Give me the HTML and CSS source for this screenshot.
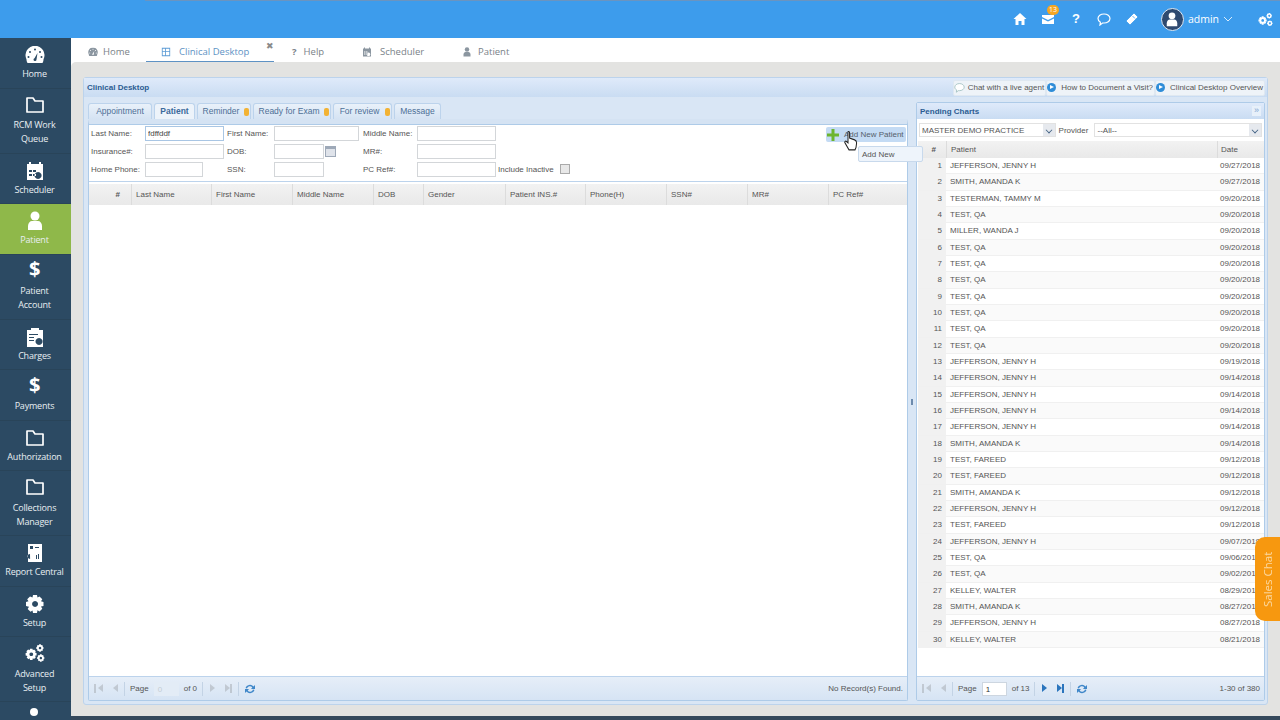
FILE: index.html
```html
<!DOCTYPE html>
<html lang="en">
<head>
    <meta charset="UTF-8">
    <title>Clinical Desktop</title>
    <link rel="stylesheet" href="styles.css">
</head>
<body>
    <svg class="defs" width="0" height="0">
        <symbol id="i-folder" viewBox="0 0 20 18"><path d="M2 2h6l2 3h8v11H2z" fill="none" stroke="currentColor" stroke-width="1.7" stroke-linejoin="round"/></symbol>
        <symbol id="i-gauge" viewBox="0 0 20 18"><path fill-rule="evenodd" d="M1.500 13.500A9.500 9.500 0 1 1 18.500 13.500c0 1.500-.5 2.500-1 3.500h-15c-.5-1-1-2-1-3.500zM9 3.500a1 1 0 1 0 2 0a1 1 0 1 0-2 0zM4 6a1 1 0 1 0 2 0a1 1 0 1 0-2 0zM14 6a1 1 0 1 0 2 0a1 1 0 1 0-2 0zM2.500 11a1 1 0 1 0 2 0a1 1 0 1 0-2 0zM15.500 11a1 1 0 1 0 2 0a1 1 0 1 0-2 0zM8.500 13.500a1.500 1.500 0 1 0 3 0l1-6.500-3 5.200c-.6.200-1 .7-1 1.300z" fill="currentColor"/></symbol>
        <symbol id="i-calendar" viewBox="0 0 18 20"><path fill-rule="evenodd" d="M1 3h2V1h2v2h8V1h2v2h2v16H1zm2 6v2h3V9zm4 0v2h3V9zM3 13v2h3v-2zm4 0v2h3v-2zm5-2a3.500 3.500 0 1 0 .1 0z" fill="currentColor"/></symbol>
        <symbol id="i-person" viewBox="0 0 16 20"><circle cx="8" cy="5" r="4.500" fill="currentColor"/><path d="M1 19v-4c0-3 2-5 4-5h6c2 0 4 2 4 5v4z" fill="currentColor"/></symbol>
        <symbol id="i-clipboard" viewBox="0 0 18 20"><path fill-rule="evenodd" d="M1 3h4V1h8v2h4v17H1zm2 4v1h9V7zm0 3v1h5v-1zm0 3v1h5v-1zm10-2a3.500 3.500 0 1 0 .1 0z" fill="currentColor"/></symbol>
        <symbol id="i-report" viewBox="0 0 16 20"><path fill-rule="evenodd" d="M1 1h14v18H1zm2 2v3h3V3zm5 1v1h4V4zm-5 7a2.500 2.500 0 1 0 .1 5zm6 1v4h1v-4zm2-1v5h1v-5z" fill="currentColor"/></symbol>
        <symbol id="i-gear" viewBox="0 0 20 20"><path fill-rule="evenodd" d="M8 1h4l.5 2.500 2-1 2.800 2.800-1.300 2 2.500.7v4l-2.500.5 1.300 2.200-2.800 2.800-2-1.300L12 19H8l-.5-2.500-2 1.300-2.800-2.800 1.300-2.200L1 12V8l2.500-.7-1.300-2L5 2.500l2.500 1zM10 7a3 3 0 1 0 .1 0z" fill="currentColor"/></symbol>
        <symbol id="i-cog-pair" viewBox="0 0 24 24"><use href="#i-gear" x="0" y="6" width="15" height="15"/><use href="#i-gear" x="13" y="1" width="10" height="10"/><use href="#i-gear" x="14" y="13" width="10" height="10"/></symbol>
        <symbol id="i-refresh" viewBox="0 0 12 12"><path d="M1.500 5a4.500 4 0 0 1 8-1.500L11 2v4H7l1.300-1.500A3 3 0 0 0 3 5.500zM10.500 7a4.500 4 0 0 1-8 1.500L1 10V6h4L3.700 7.500A3 3 0 0 0 9 6.500z" fill="#3f87c9"/></symbol>
    </svg>

    <header class="topbar">
        <svg class="top-icon" viewBox="0 0 14 14"><path d="M7 1 .5 7H2.500v6h3V9h3v4h3V7h2z" fill="currentColor"/></svg>
        <span class="mail">
            <svg class="top-icon" viewBox="0 0 14 14"><path d="M1 3h12v2L7 8 1 5zm0 3.500L7 9.500l6-3V12H1z" fill="currentColor"/></svg>
            <b class="mail-badge">13</b>
        </span>
        <span class="top-icon help">?</span>
        <svg class="top-icon" viewBox="0 0 14 14"><path d="M7 2c3.300 0 6 2 6 4.500S10.300 11 7 11H5.500L3 13l.4-2.800C1.900 9.400 1 8 1 6.500 1 4 3.700 2 7 2z" fill="none" stroke="currentColor" stroke-width="1.200"/></svg>
        <svg class="top-icon" viewBox="0 0 14 14"><path d="M9 1l4 4-8 8-4-4zM7.500 4 10 6.500" fill="currentColor" stroke="#3d9cec" stroke-width=".8"/></svg>
        <span class="avatar"><svg width="12" height="15" viewBox="0 0 16 20"><use href="#i-person"/></svg></span>
        <span class="user">admin</span>
        <svg class="chev" viewBox="0 0 10 6"><path d="M1 1l4 4 4-4" fill="none" stroke="currentColor"/></svg>
        <svg class="top-icon cogs" viewBox="0 0 24 24"><use href="#i-cog-pair"/></svg>
    </header>

    <div class="shell">
        <nav class="sidebar">
            <a class="nav-item"><svg class="nav-icon" viewBox="0 0 20 18"><use href="#i-gauge"/></svg>Home</a>
            <a class="nav-item tall"><svg class="nav-icon" viewBox="0 0 20 18"><use href="#i-folder"/></svg>RCM Work<br>Queue</a>
            <a class="nav-item"><svg class="nav-icon" viewBox="0 0 18 20"><use href="#i-calendar"/></svg>Scheduler</a>
            <a class="nav-item active"><svg class="nav-icon" viewBox="0 0 16 20"><use href="#i-person"/></svg>Patient</a>
            <a class="nav-item tall"><span class="dollar">$</span>Patient<br>Account</a>
            <a class="nav-item"><svg class="nav-icon" viewBox="0 0 18 20"><use href="#i-clipboard"/></svg>Charges</a>
            <a class="nav-item"><span class="dollar">$</span>Payments</a>
            <a class="nav-item"><svg class="nav-icon" viewBox="0 0 20 18"><use href="#i-folder"/></svg>Authorization</a>
            <a class="nav-item tall"><svg class="nav-icon" viewBox="0 0 20 18"><use href="#i-folder"/></svg>Collections<br>Manager</a>
            <a class="nav-item"><svg class="nav-icon" viewBox="0 0 16 20"><use href="#i-report"/></svg>Report Central</a>
            <a class="nav-item"><svg class="nav-icon" viewBox="0 0 20 20"><use href="#i-gear"/></svg>Setup</a>
            <a class="nav-item tall"><svg class="nav-icon" viewBox="0 0 24 24"><use href="#i-cog-pair"/></svg>Advanced<br>Setup</a>
            <span class="nav-dot"></span>
        </nav>

        <div class="workspace">
            <div class="page-tabs">
                <a class="page-tab tab-home"><svg class="tab-icon" viewBox="0 0 20 18"><use href="#i-gauge"/></svg>Home</a>
                <a class="page-tab tab-clinical current">
                    <svg class="tab-icon" viewBox="0 0 12 12"><path d="M1 1h10v10H1zm1 1v3h3V2zm4 0v3h4V2zM2 6v4h3V6zm4 0v4h4V6z" fill="currentColor" fill-rule="evenodd"/></svg>Clinical Desktop
                    <span class="tab-close">✖</span>
                </a>
                <a class="page-tab tab-help"><span class="tab-q">?</span>Help</a>
                <a class="page-tab tab-sched"><svg class="tab-icon" viewBox="0 0 18 20"><use href="#i-calendar"/></svg>Scheduler</a>
                <a class="page-tab tab-patient"><svg class="tab-icon" viewBox="0 0 16 20"><use href="#i-person"/></svg>Patient</a>
            </div>

            <div class="stage">
                <section class="desk">
                    <div class="desk-title">
                        <span>Clinical Desktop</span>
                        <div class="help-links">
                            <a class="help-link"><svg width="11" height="11" viewBox="0 0 14 14"><path d="M7 2c3.300 0 6 2 6 4.500S10.300 11 7 11H5.500L3 13l.4-2.800C1.900 9.400 1 8 1 6.500 1 4 3.700 2 7 2z" fill="#fff" stroke="#9bb" stroke-width="1"/></svg>Chat with a live agent</a>
                            <a class="help-link"><i class="play"></i>How to Document a Visit?</a>
                            <a class="help-link"><i class="play"></i>Clinical Desktop Overview</a>
                        </div>
                    </div>

                    <div class="desk-body">
                        <div class="left-col">
                            <div class="sub-tabs">
                                <a class="sub-tab w-appt">Appointment</a>
                                <a class="sub-tab w-patient selected">Patient</a>
                                <a class="sub-tab w-rem">Reminder<i class="dot-badge"></i></a>
                                <a class="sub-tab w-ready">Ready for Exam<i class="dot-badge"></i></a>
                                <a class="sub-tab w-review">For review<i class="dot-badge"></i></a>
                                <a class="sub-tab w-msg">Message</a>
                            </div>
                            <div class="left-panel">
                                <form class="search">
                                    <label>Last Name:</label><input class="f-long focus" value="fdffddf">
                                    <label>First Name:</label><input class="f-mid">
                                    <label>Middle Name:</label><input class="f-long">
                                    <span></span><span></span>
                                    <label>Insurance#:</label><input class="f-long">
                                    <label>DOB:</label><span class="date-wrap"><input class="f-short"><i class="cal"></i></span>
                                    <label>MR#:</label><input class="f-long">
                                    <span></span><span></span>
                                    <label>Home Phone:</label><input class="f-phone">
                                    <label>SSN:</label><input class="f-short">
                                    <label>PC Ref#:</label><input class="f-long">
                                    <label>Include Inactive</label><i class="check"></i>
                                </form>
                                <a class="add-new">
                                    <svg width="12" height="12" viewBox="0 0 12 12"><path d="M4.500 0h3v4.500H12v3H7.500V12h-3V7.500H0v-3h4.500z" fill="#6db52f"/></svg>
                                    Add New Patient
                                </a>
                                <div class="grid-head">
                                    <span class="num">#</span><span>Last Name</span><span>First Name</span><span>Middle Name</span><span>DOB</span><span>Gender</span><span>Patient INS.#</span><span>Phone(H)</span><span>SSN#</span><span>MR#</span><span>PC Ref#</span>
                                </div>
                                <div class="grid-empty"></div>
                                <div class="pager">
                                    <i class="pg first off"></i><i class="pg prev off"></i><i class="sep"></i>
                                    <span>Page</span><span class="pg-input blank">0</span><span>of 0</span><i class="sep"></i>
                                    <i class="pg next off"></i><i class="pg last off"></i><i class="sep"></i>
                                    <svg width="12" height="12" viewBox="0 0 12 12"><use href="#i-refresh"/></svg>
                                    <span class="pg-info">No Record(s) Found.</span>
                                </div>
                            </div>
                        </div>

                        <div class="splitter"><i></i></div>

                        <aside class="right-col">
                            <div class="right-title">Pending Charts<span class="collapse">»</span></div>
                            <div class="filters">
                                <span class="select practice">MASTER DEMO PRACTICE<i class="arrow"></i></span>
                                <span class="provider">Provider</span>
                                <span class="select all">--All--<i class="arrow"></i></span>
                            </div>
                            <div class="chart-head"><span class="num">#</span><span>Patient</span><span>Date</span></div>
                            <div class="chart-rows">
                                <div class="row"><span>1</span><span>JEFFERSON, JENNY H</span><span>09/27/2018</span></div>
                                <div class="row"><span>2</span><span>SMITH, AMANDA K</span><span>09/27/2018</span></div>
                                <div class="row"><span>3</span><span>TESTERMAN, TAMMY M</span><span>09/20/2018</span></div>
                                <div class="row"><span>4</span><span>TEST, QA</span><span>09/20/2018</span></div>
                                <div class="row"><span>5</span><span>MILLER, WANDA J</span><span>09/20/2018</span></div>
                                <div class="row"><span>6</span><span>TEST, QA</span><span>09/20/2018</span></div>
                                <div class="row"><span>7</span><span>TEST, QA</span><span>09/20/2018</span></div>
                                <div class="row"><span>8</span><span>TEST, QA</span><span>09/20/2018</span></div>
                                <div class="row"><span>9</span><span>TEST, QA</span><span>09/20/2018</span></div>
                                <div class="row"><span>10</span><span>TEST, QA</span><span>09/20/2018</span></div>
                                <div class="row"><span>11</span><span>TEST, QA</span><span>09/20/2018</span></div>
                                <div class="row"><span>12</span><span>TEST, QA</span><span>09/20/2018</span></div>
                                <div class="row"><span>13</span><span>JEFFERSON, JENNY H</span><span>09/19/2018</span></div>
                                <div class="row"><span>14</span><span>JEFFERSON, JENNY H</span><span>09/14/2018</span></div>
                                <div class="row"><span>15</span><span>JEFFERSON, JENNY H</span><span>09/14/2018</span></div>
                                <div class="row"><span>16</span><span>JEFFERSON, JENNY H</span><span>09/14/2018</span></div>
                                <div class="row"><span>17</span><span>JEFFERSON, JENNY H</span><span>09/14/2018</span></div>
                                <div class="row"><span>18</span><span>SMITH, AMANDA K</span><span>09/14/2018</span></div>
                                <div class="row"><span>19</span><span>TEST, FAREED</span><span>09/12/2018</span></div>
                                <div class="row"><span>20</span><span>TEST, FAREED</span><span>09/12/2018</span></div>
                                <div class="row"><span>21</span><span>SMITH, AMANDA K</span><span>09/12/2018</span></div>
                                <div class="row"><span>22</span><span>JEFFERSON, JENNY H</span><span>09/12/2018</span></div>
                                <div class="row"><span>23</span><span>TEST, FAREED</span><span>09/12/2018</span></div>
                                <div class="row"><span>24</span><span>JEFFERSON, JENNY H</span><span>09/07/2018</span></div>
                                <div class="row"><span>25</span><span>TEST, QA</span><span>09/06/2018</span></div>
                                <div class="row"><span>26</span><span>TEST, QA</span><span>09/02/2018</span></div>
                                <div class="row"><span>27</span><span>KELLEY, WALTER</span><span>08/29/2018</span></div>
                                <div class="row"><span>28</span><span>SMITH, AMANDA K</span><span>08/27/2018</span></div>
                                <div class="row"><span>29</span><span>JEFFERSON, JENNY H</span><span>08/27/2018</span></div>
                                <div class="row"><span>30</span><span>KELLEY, WALTER</span><span>08/21/2018</span></div>
                            </div>
                            <div class="pager">
                                <i class="pg first off"></i><i class="pg prev off"></i><i class="sep"></i>
                                <span>Page</span><span class="pg-input">1</span><span>of 13</span><i class="sep"></i>
                                <i class="pg next"></i><i class="pg last"></i><i class="sep"></i>
                                <svg width="12" height="12" viewBox="0 0 12 12"><use href="#i-refresh"/></svg>
                                <span class="pg-info">1-30 of 380</span>
                            </div>
                        </aside>
                    </div>
                </section>
            </div>
            <div class="bottom-strip"></div>
        </div>
    </div>

    <!-- overlays -->
    <div class="tooltip">Add New</div>
    <svg class="cursor" width="14" height="21" viewBox="0 0 14 18" preserveAspectRatio="none"><path d="M4 1.500c1-.5 1.600 0 1.600 1V7l5 1.500c1.500.5 2 1.200 2 2.500l-.6 4-1 2H5L1 11c-.8-1 .5-2 1.500-1.200L4 11z" fill="#fff" stroke="#222" stroke-width="1"/></svg>
    <div class="sales-chat">Sales Chat</div>
</body>
</html>
```

FILE: styles.css
```css
* {
    box-sizing: border-box;
}
html, body {
    margin: 0;
    height: 720px;
    overflow: hidden;
}
body {
    font-family: 'Liberation Sans', Arial, sans-serif;
    font-size: 8px;
    color: #555;
    position: relative;
    background: #fff;
}
.defs {
    position: absolute;
}

/* top bar */
.topbar {
    height: 38px;
    background: #3d9cec;
    color: #fff;
    display: flex;
    align-items: center;
    justify-content: flex-end;
    padding-right: 7px;
    gap: 14px;
    position: relative;
}
.topbar::before {
    content: '';
    position: absolute;
    left: 145px;
    right: 0;
    top: 0;
    height: 1px;
    background: #6a94c0;
}
.top-icon {
    width: 14px;
    height: 14px;
    display: block;
}
.help {
    font: bold 13px/14px 'Liberation Sans', sans-serif;
    text-align: center;
}
.mail {
    position: relative;
}
.mail-badge {
    position: absolute;
    top: -7px;
    left: 6px;
    width: 12px;
    height: 10px;
    border-radius: 5px;
    background: #f5a623;
    font: 7px/10px 'Open Sans', sans-serif;
    text-align: center;
}
.avatar {
    width: 23px;
    height: 23px;
    margin-left: 8px;
    border-radius: 50%;
    background: #2f4a70;
    border: 1px solid #dbe8f5;
    display: flex;
    align-items: center;
    justify-content: center;
}
.user {
    font: 10.500px 'Open Sans', sans-serif;
    margin-left: -10px;
}
.chev {
    width: 10px;
    height: 6px;
    margin-left: -10px;
    opacity: .8;
}
.cogs {
    width: 15px;
    height: 15px;
    margin-left: 11px;
}

.shell {
    display: flex;
    height: 682px;
}

/* sidebar */
.sidebar {
    width: 71px;
    flex: none;
    background: #2c4a63;
    color: #e8eef2;
    overflow: hidden;
    font: 9px/14px 'Open Sans', sans-serif;
    letter-spacing: -.2px;
    text-align: center;
}
.nav-item {
    display: flex;
    flex-direction: column;
    align-items: center;
    height: 50.500px;
    padding: 7px 2px 0 0;
    border-bottom: 1px solid #294459;
    white-space: nowrap;
}
.nav-item.tall {
    height: 65px;
    padding-top: 6px;
}
.nav-item.active {
    background: #8fb84a;
}
.nav-icon {
    width: 20px;
    height: 20px;
    color: #fff;
    margin-bottom: 2px;
    flex: none;
}
.tall .nav-icon {
    margin-bottom: 3.500px;
}
.dollar {
    font: bold 20px/20px 'Open Sans', sans-serif;
    color: #fff;
    margin-bottom: 4px;
    margin-top: -2px;
}
.tall .dollar {
    margin-bottom: 5.500px;
}
.nav-dot {
    display: block;
    width: 8px;
    height: 8px;
    margin: 6px 0 0 30px;
    border-radius: 50%;
    background: #fff;
}

/* page tabs */
.workspace {
    flex: 1;
    min-width: 0;
    display: flex;
    flex-direction: column;
}
.page-tabs {
    height: 24px;
    flex: none;
    display: flex;
    font: 9.500px/24px 'Open Sans', sans-serif;
    color: #7a8288;
    background: #fff;
}
.page-tab {
    display: flex;
    align-items: center;
    gap: 5px;
    padding-top: 4px;
    position: relative;
}
.tab-icon {
    width: 10px;
    height: 10px;
    color: #8b96a0;
}
.tab-home {
    margin-left: 17px;
    width: 58px;
}
.tab-clinical {
    width: 128px;
    padding-left: 15px;
    color: #5e92c4;
    border-bottom: 1px solid #5e92c4;
    gap: 8px;
}
.tab-clinical .tab-icon {
    color: #5b9bd5;
}
.tab-close {
    position: absolute;
    right: 0;
    top: -4px;
    font-size: 9px;
    color: #8a8a8a;
}
.tab-help {
    margin-left: 18px;
    width: 70px;
    gap: 7px;
}
.tab-q {
    font-weight: bold;
}
.tab-sched {
    width: 100px;
    gap: 8px;
}
.tab-patient {
    gap: 6px;
}

/* main panel */
.stage {
    flex: 1;
    min-height: 0;
    background: #e3e3e1;
    border-radius: 5px 0 0 0;
    padding: 15px 12px 11px;
}
.bottom-strip {
    height: 4px;
    flex: none;
    background: #35495c;
}
.desk {
    height: 100%;
    background: #d9e6f5;
    border: 1px solid #bcd3ec;
    border-radius: 3px;
    display: flex;
    flex-direction: column;
    padding: 0 2px 3px 4px;
}
.desk-title {
    height: 19px;
    flex: none;
    display: flex;
    align-items: center;
    justify-content: space-between;
    font-weight: bold;
    color: #2b5c92;
    background: linear-gradient(#dfeafa, #c9dcf2);
    margin: 0 -2px 0 -4px;
    padding: 0 2px 0 3px;
}
.help-links {
    display: flex;
    font-weight: normal;
    color: #555;
    height: 16px;
}
.help-link {
    display: flex;
    align-items: center;
    gap: 3px;
    padding: 0 1px 0 0;
    background: #eef3f8;
    border: 1px solid #dfe8f1;
    border-radius: 2px;
}
.play {
    width: 9px;
    height: 9px;
    border-radius: 50%;
    background: #2f8dd8;
    margin-right: 2px;
    position: relative;
}
.play::after {
    content: '';
    position: absolute;
    left: 3px;
    top: 2px;
    border-left: 4px solid #fff;
    border-top: 2.500px solid transparent;
    border-bottom: 2.500px solid transparent;
}
.desk-body {
    flex: 1;
    min-height: 0;
    display: flex;
    padding-top: 5px;
}

/* left side */
.left-col {
    width: 820px;
    flex: none;
    display: flex;
    flex-direction: column;
    padding-top: 1px;
}
.sub-tabs {
    height: 16px;
    flex: none;
    display: flex;
    gap: 2px;
}
.sub-tab {
    height: 16px;
    text-align: center;
    font-size: 8.500px;
    line-height: 15px;
    color: #4d6f96;
    background: linear-gradient(#e9f1fa, #d5e3f3);
    border: 1px solid #bcd3ec;
    border-bottom: 0;
    border-radius: 3px 3px 0 0;
    white-space: nowrap;
    position: relative;
}
.sub-tab.selected {
    background: #edf3fa;
    font-weight: bold;
    color: #3c6a9c;
}
.w-appt { width: 64px; }
.w-patient { width: 41px; }
.w-rem { width: 54px; padding-right: 6px; }
.w-ready { width: 78px; padding-right: 6px; }
.w-review { width: 59px; padding-right: 6px; }
.w-msg { width: 47px; }
.dot-badge {
    position: absolute;
    right: 1px;
    top: 4px;
    width: 5px;
    height: 8px;
    border-radius: 2px;
    background: #f2b233;
}
.left-panel {
    flex: 1;
    min-height: 0;
    position: relative;
    display: flex;
    flex-direction: column;
    background: #fff;
    border: 1px solid #aecbe8;
    border-top: 5px solid #d5e3f3;
    border-radius: 2px;
}
.search {
    height: 58px;
    flex: none;
    padding-left: 2px;
    display: grid;
    grid-template-columns: 54px 82px 47px 89px 54px 81px 62px 12px;
    grid-auto-rows: 18px;
    align-items: center;
    border-bottom: 1px solid #bcd3ec;
    box-shadow: inset 0 1px 0 #aecbe8;
}
.search label {
    color: #555;
    white-space: nowrap;
}
.search input {
    height: 15px;
    padding: 0 2px;
    border: 1px solid #d3d6d9;
    font: 8px 'Liberation Sans', sans-serif;
    color: #444;
    background: #fff;
    display: block;
}
.f-long { width: 79px; }
.f-mid { width: 85px; }
.f-short { width: 50px; }
.f-phone { width: 58px; }
.search input.focus {
    border-color: #a9c6e4;
    text-decoration: underline wavy #d33 1px;
}
.date-wrap {
    display: flex;
    align-items: center;
    gap: 1px;
}
.cal {
    width: 11px;
    height: 11px;
    background: #dfe3ea;
    border: 1px solid #9ea9b8;
    border-top: 3px solid #9ea9b8;
}
.check {
    width: 10px;
    height: 10px;
    background: #e8e8e8;
    border: 1px solid #aaa;
}
.add-new {
    position: absolute;
    top: 3px;
    right: 1px;
    width: 80px;
    height: 15px;
    display: flex;
    align-items: center;
    gap: 5px;
    padding-left: 1px;
    white-space: nowrap;
    background: #c4dbf4;
    border-radius: 2px;
    color: #55606b;
}
.grid-head {
    height: 21px;
    margin-top: 2px;
    flex: none;
    display: grid;
    grid-template-columns: 42px 80px 81px 81px 50px 82px 80px 81px 81px 81px 1fr;
    line-height: 21px;
    background: linear-gradient(#f2f2f2, #e9e9e9);
    color: #555;
}
.grid-head span {
    padding-left: 4px;
    border-left: 1px solid #dcdcdc;
}
.grid-head .num {
    border-left: 0;
    text-align: right;
    padding-right: 11px;
    font-weight: bold;
}
.grid-empty {
    flex: 1;
    min-height: 0;
    background: #fff;
}
.pager {
    height: 24px;
    flex: none;
    display: flex;
    align-items: center;
    gap: 5px;
    padding: 0 4px 0 5px;
    background: linear-gradient(#e6eef8, #d6e4f4);
    border-top: 1px solid #bcd3ec;
    color: #555;
}
.pg {
    width: 10px;
    height: 9px;
    position: relative;
    display: block;
}
.pg::after {
    content: '';
    position: absolute;
    top: 0;
    border-top: 4.500px solid transparent;
    border-bottom: 4.500px solid transparent;
}
.first::before, .last::before {
    content: '';
    position: absolute;
    top: 0;
    width: 2px;
    height: 9px;
    background: #2b75bd;
}
.first::before { left: 0; }
.last::before { right: 1px; }
.first::after, .prev::after {
    right: 1px;
    border-right: 5px solid #2b75bd;
}
.next::after, .last::after {
    left: 2px;
    border-left: 5px solid #2b75bd;
}
.pg.off {
    opacity: .25;
    filter: grayscale(1);
}
.sep {
    width: 1px;
    height: 14px;
    background: #c3d3e5;
}
.pg-input {
    width: 25px;
    height: 14px;
    padding-left: 3px;
    line-height: 13px;
    background: #fff;
    border: 1px solid #cdd6e0;
    color: #333;
}
.pg-input.blank {
    background: #e3ecf6;
    border-color: #e3ecf6;
    color: #c4ccd4;
}
.pg-info {
    margin-left: auto;
}

.splitter {
    width: 8px;
    flex: none;
    display: flex;
    align-items: center;
    justify-content: center;
}
.splitter i {
    width: 2px;
    height: 6px;
    background: #6d8bad;
}

/* right side */
.right-col {
    flex: 1;
    min-width: 0;
    display: flex;
    flex-direction: column;
    background: #fff;
    border: 1px solid #aecbe8;
    border-radius: 2px;
}
.right-title {
    height: 16px;
    flex: none;
    display: flex;
    align-items: center;
    justify-content: space-between;
    padding: 0 3px;
    font-weight: bold;
    color: #2b5c92;
    background: linear-gradient(#dfeafa, #c9dcf2);
}
.collapse {
    width: 9px;
    height: 10px;
    line-height: 8px;
    text-align: center;
    color: #7fa5d0;
    background: #e7f0fa;
    font-weight: normal;
    font-size: 9px;
}
.filters {
    height: 22px;
    flex: none;
    display: flex;
    align-items: center;
    padding: 0 2px;
    color: #555;
}
.select {
    height: 14px;
    display: flex;
    align-items: center;
    justify-content: space-between;
    padding-left: 2px;
    background: #fff;
    border: 1px solid #e2e2e2;
    color: #555;
}
.practice { width: 137px; }
.provider { width: 36px; margin-left: 3px; }
.all { width: 168px; }
.arrow {
    width: 12px;
    height: 12px;
    background: #e6e9ee;
    position: relative;
}
.arrow::after {
    content: '';
    position: absolute;
    left: 3px;
    top: 3px;
    width: 5px;
    height: 5px;
    border-right: 1.500px solid #3f5f82;
    border-bottom: 1.500px solid #3f5f82;
    transform: rotate(45deg) scale(.8);
}
.chart-head, .row {
    display: grid;
    grid-template-columns: 28px 271px 1fr;
}
.chart-head {
    height: 17px;
    flex: none;
    margin-left: 1px;
    line-height: 17px;
    background: linear-gradient(#f2f2f2, #e9e9e9);
}
.chart-head span {
    padding-left: 4px;
    border-left: 1px solid #dcdcdc;
}
.chart-head span:last-child {
    padding-left: 3px;
}
.chart-head .num {
    border-left: 0;
    text-align: right;
    padding-right: 10px;
    font-weight: bold;
}
.chart-rows {
    flex: 1;
    min-height: 0;
    margin-left: 1px;
}
.row {
    height: 16.340px;
    line-height: 16px;
    border-bottom: 1px solid #f0f0f0;
    color: #555;
    white-space: nowrap;
}
.row:nth-child(even) {
    background: #fafafa;
}
.row span:first-child {
    background: #f1f1f1;
    text-align: right;
    padding-right: 4px;
}
.row span:nth-child(2) {
    padding-left: 4px;
}
.row span:last-child {
    padding-left: 3px;
}

/* things lying over the page */
.tooltip {
    position: absolute;
    left: 858px;
    top: 146px;
    width: 65px;
    height: 16px;
    padding-left: 3px;
    line-height: 16px;
    color: #555;
    background: #eef4fb;
    border: 1px solid #c8d9ec;
    border-radius: 2px;
}
.cursor {
    position: absolute;
    left: 844px;
    top: 130px;
}
.sales-chat {
    position: absolute;
    right: 0;
    top: 537px;
    width: 25px;
    height: 84px;
    background: #f7980f;
    color: #fbd9a3;
    font: 11.500px/25px 'Open Sans', sans-serif;
    text-align: center;
    writing-mode: vertical-rl;
    transform: rotate(180deg);
    border-radius: 0 10px 10px 0;
}
```
